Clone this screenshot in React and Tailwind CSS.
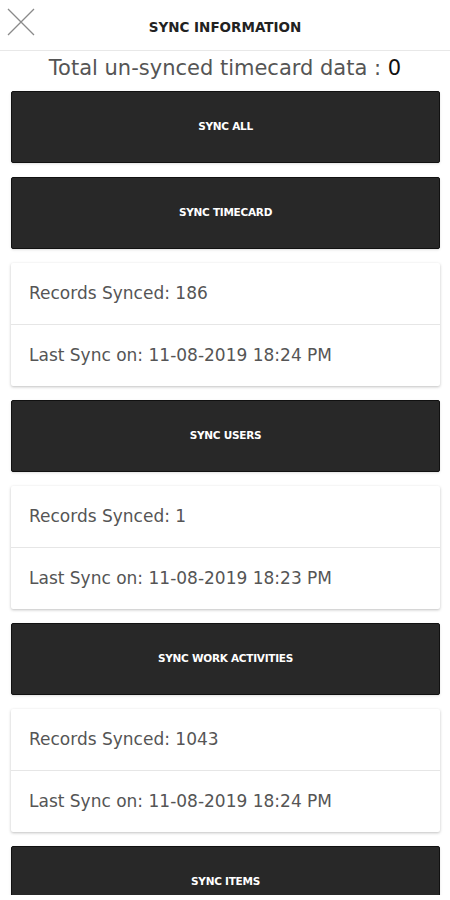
import React from 'react';

const sections = [
  { label: 'SYNC TIMECARD', records: 186, last: '11-08-2019 18:24 PM' },
  { label: 'SYNC USERS', records: 1, last: '11-08-2019 18:23 PM' },
  { label: 'SYNC WORK ACTIVITIES', records: 1043, last: '11-08-2019 18:24 PM' },
];

function SyncButton({ label }) {
  return (
    <button className="w-full h-[72px] shrink-0 bg-[#282828] border border-[#111] rounded-[2px] shadow flex items-center justify-center text-white text-[10.5px] font-bold tracking-tight">
      {label}
    </button>
  );
}

function InfoCard({ records, last }) {
  return (
    <div className="bg-white rounded-[2px] shadow-[0_1px_3px_rgba(0,0,0,0.25)] text-[#555] text-[17px]">
      <div className="h-[62px] flex items-center px-[18px] border-b border-[#e6e6e6]">
        Records Synced: {records}
      </div>
      <div className="h-[61px] flex items-center px-[18px]">
        Last Sync on: {last}
      </div>
    </div>
  );
}

export default function App() {
  return (
    <div
      className="w-[450px] h-[895px] overflow-hidden bg-white"
      style={{ fontFamily: '"DejaVu Sans", "Open Sans", sans-serif' }}
    >
      {/* Header */}
      <div className="relative h-[51px] border-b border-[#e8e8e8] flex items-center justify-center">
        <svg className="absolute left-[7px] top-[8px]" width="28" height="28" viewBox="0 0 28 28">
          <path d="M1 1 L27 27 M27 1 L1 27" stroke="#8a8a8a" strokeWidth="1.3" fill="none" />
        </svg>
        <span className="text-[13.5px] font-bold text-[#222] mt-[5px]">SYNC INFORMATION</span>
      </div>

      <div className="text-center text-[21px] text-[#555] mt-[2px] mb-[8px] leading-[30px]">
        Total un-synced timecard data : <span className="text-[#111]">0</span>
      </div>

      <div className="px-[11px] pr-[10px] flex flex-col gap-[14px]">
        <SyncButton label="SYNC ALL" />
        {sections.map((s) => (
          <React.Fragment key={s.label}>
            <SyncButton label={s.label} />
            <InfoCard records={s.records} last={s.last} />
          </React.Fragment>
        ))}
        <SyncButton label="SYNC ITEMS" />
      </div>
    </div>
  );
}
